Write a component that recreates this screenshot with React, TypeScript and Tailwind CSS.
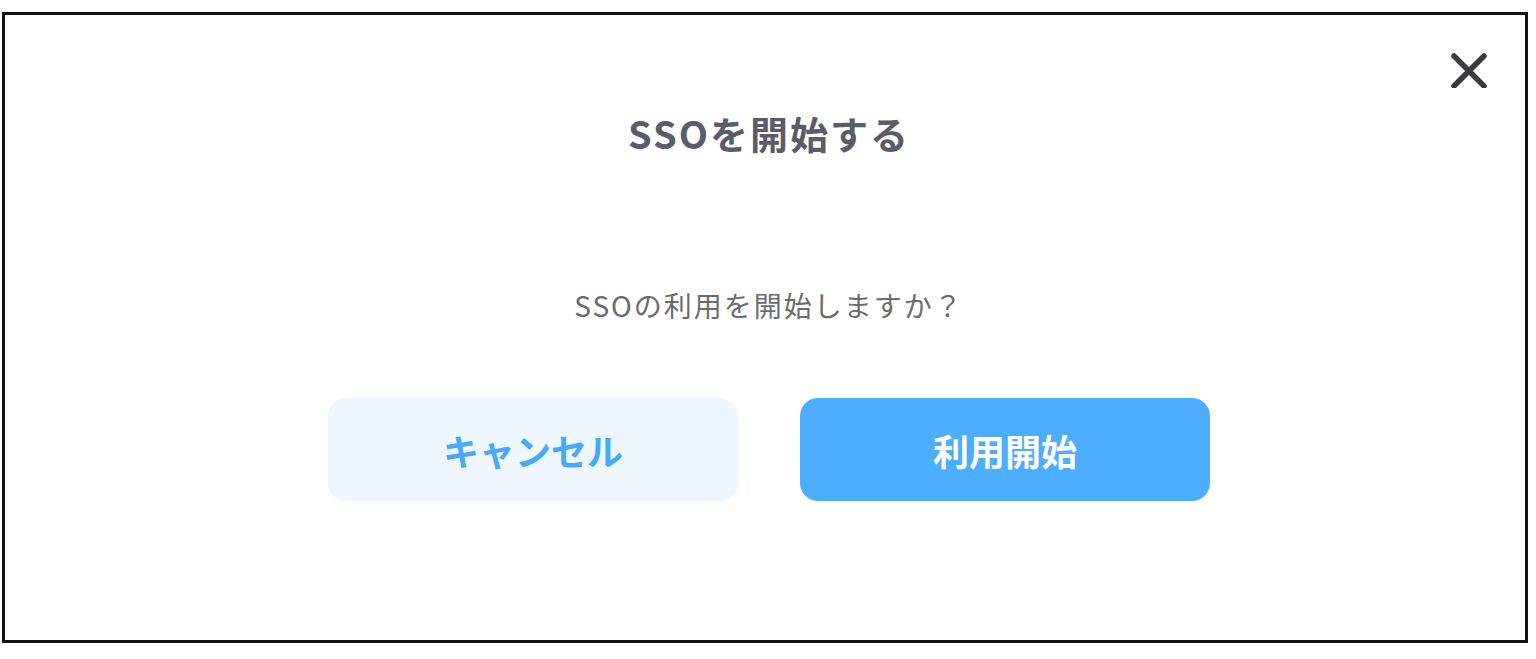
import React from "react";

const font = {
  fontFamily: '"Noto Sans CJK JP", "Noto Sans", sans-serif',
};

const CloseIcon = () => (
  <svg width="36" height="36" viewBox="0 0 36 36" fill="none">
    <path
      d="M3 4 33 34M33 4 3 34"
      stroke="#3b3b3f"
      strokeWidth="5.5"
      strokeLinecap="round"
    />
  </svg>
);

export default function App() {
  return (
    <div className="h-[659px] w-[1536px] bg-white pl-[2px] pt-[12px]" style={font}>
      <div className="relative flex h-[631px] w-[1526px] flex-col items-center border-[3px] border-[#111] pl-[8px]">
        <button className="absolute right-[38px] top-[37px] p-0">
          <CloseIcon />
        </button>

        <h1 className="mt-[99px] text-[38px] leading-[38px] font-bold tracking-[2px] text-[#5a5c6c]">
          SSOを開始する
        </h1>

        <p className="mt-[139px] text-[28px] leading-[28px] tracking-[2px] text-[#6b6b70]">
          SSOの利用を開始しますか？
        </p>

        <div className="mt-[79px] flex gap-[62px]">
          <button className="flex h-[103px] w-[410px] items-center justify-center rounded-[18px] bg-[#eef6ff] text-[36px] font-bold text-[#4aa8f8]">
            キャンセル
          </button>
          <button className="flex h-[103px] w-[410px] items-center justify-center rounded-[18px] bg-[#4dadff] text-[36px] font-bold text-white">
            利用開始
          </button>
        </div>
      </div>
    </div>
  );
}
